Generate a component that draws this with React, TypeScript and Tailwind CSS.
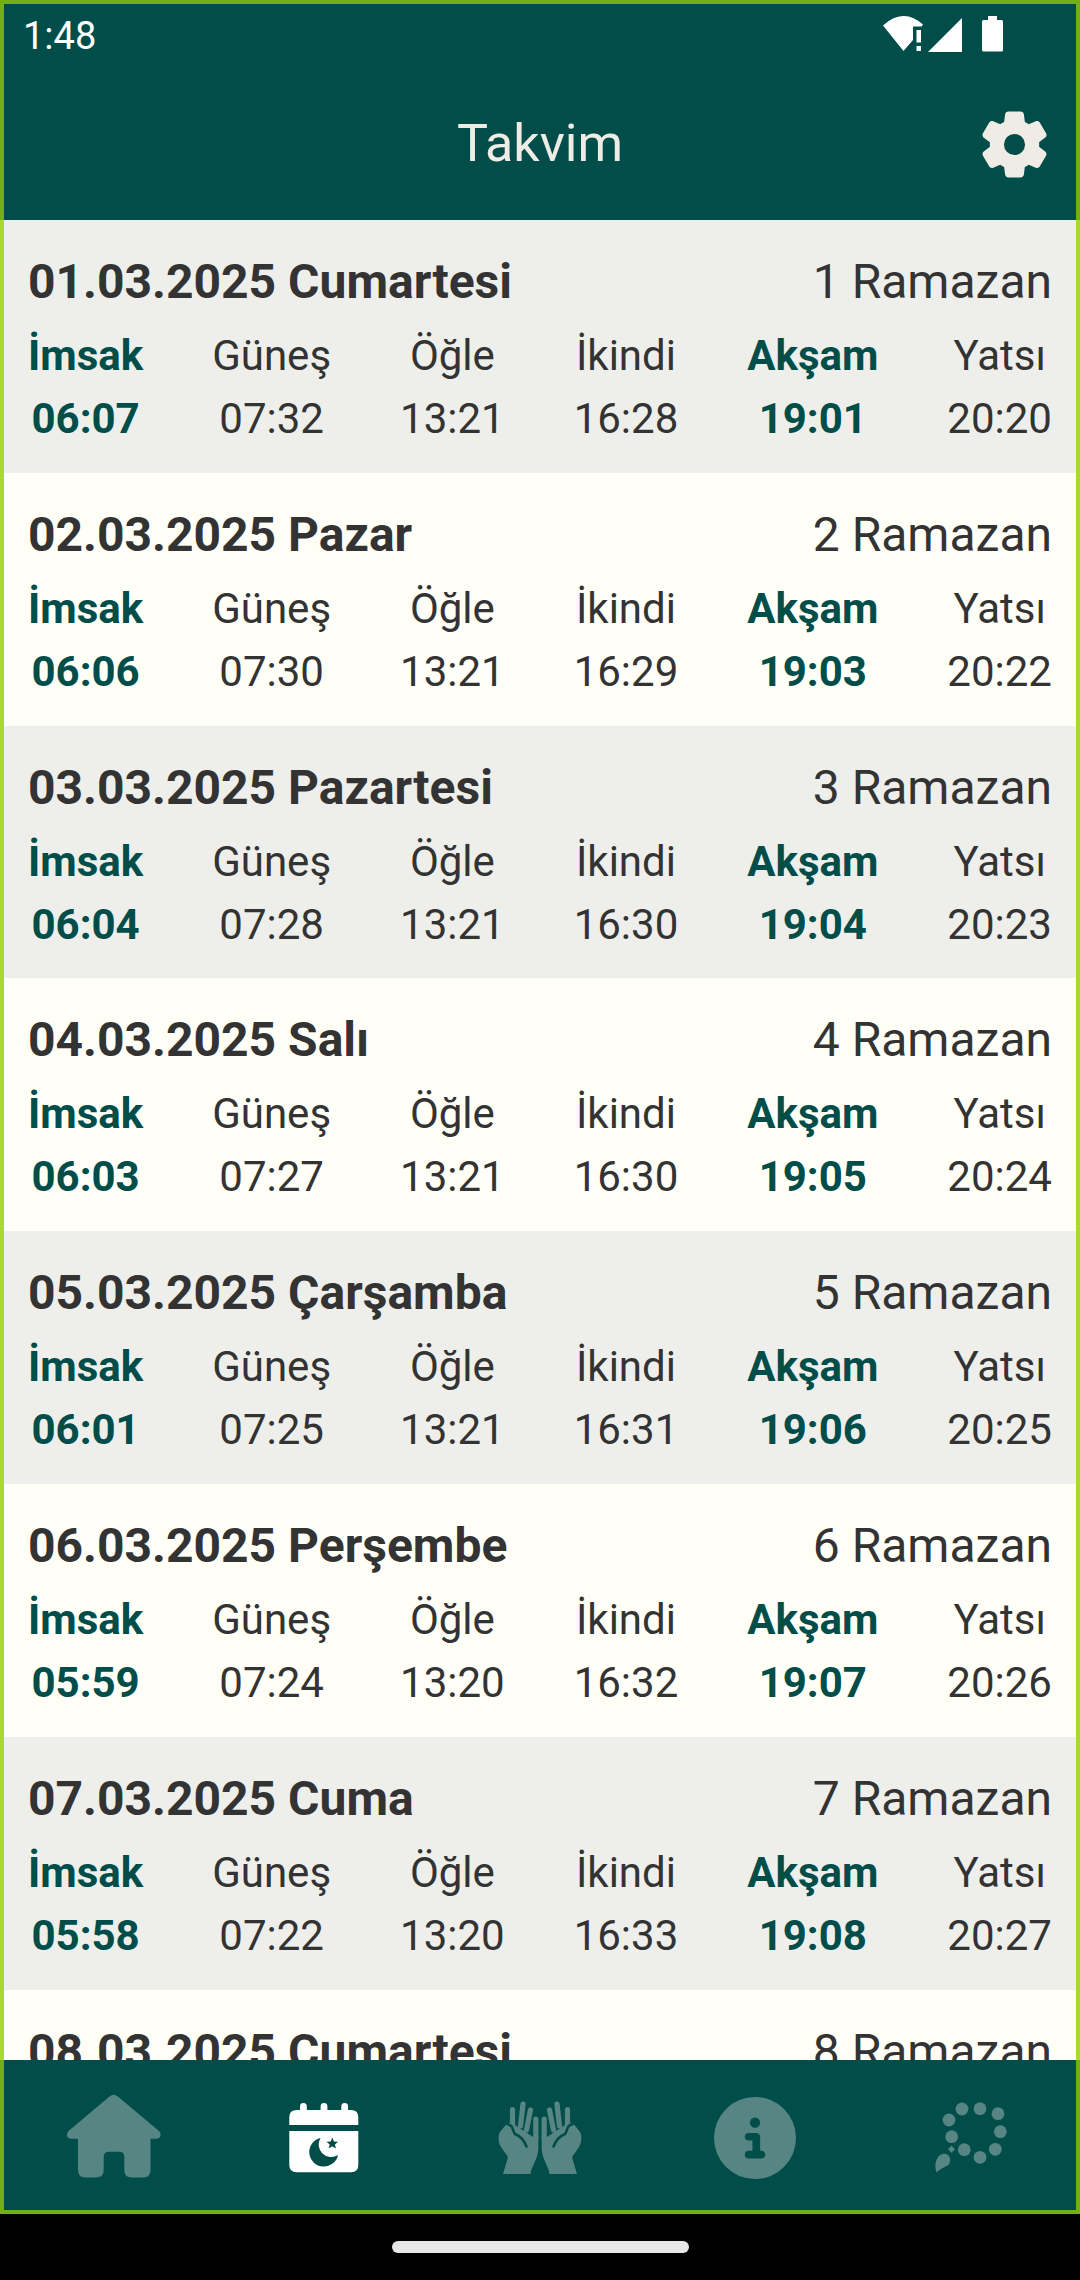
import { FaCircleInfo } from "react-icons/fa6";

const MUTED = "#568583";
const TEAL = "#004d4a";

const days = [
  { date: "01.03.2025 Cumartesi", hijri: "1 Ramazan", times: ["06:07", "07:32", "13:21", "16:28", "19:01", "20:20"] },
  { date: "02.03.2025 Pazar", hijri: "2 Ramazan", times: ["06:06", "07:30", "13:21", "16:29", "19:03", "20:22"] },
  { date: "03.03.2025 Pazartesi", hijri: "3 Ramazan", times: ["06:04", "07:28", "13:21", "16:30", "19:04", "20:23"] },
  { date: "04.03.2025 Salı", hijri: "4 Ramazan", times: ["06:03", "07:27", "13:21", "16:30", "19:05", "20:24"] },
  { date: "05.03.2025 Çarşamba", hijri: "5 Ramazan", times: ["06:01", "07:25", "13:21", "16:31", "19:06", "20:25"] },
  { date: "06.03.2025 Perşembe", hijri: "6 Ramazan", times: ["05:59", "07:24", "13:20", "16:32", "19:07", "20:26"] },
  { date: "07.03.2025 Cuma", hijri: "7 Ramazan", times: ["05:58", "07:22", "13:20", "16:33", "19:08", "20:27"] },
  { date: "08.03.2025 Cumartesi", hijri: "8 Ramazan", times: ["05:56", "07:20", "13:20", "16:33", "19:09", "20:28"] },
];

const labels = ["İmsak", "Güneş", "Öğle", "İkindi", "Akşam", "Yatsı"];

function StatusIcons() {
  return (
    <div className="flex items-start pr-[73px] pt-[12px]">
      <svg width="41" height="36" viewBox="0 0 41 36" fill="#fff">
        <path d="M0 9.5Q20-9 40 8.5L38.5 10.5H30V24L20.5 35Z" />
        <rect x="33.5" y="14" width="4.5" height="12.5" />
        <rect x="33.5" y="30" width="4.5" height="5" />
      </svg>
      <svg className="ml-[4px] mt-[1px]" width="34" height="35" viewBox="0 0 34 35" fill="#fff">
        <path d="M0 35 34 1V35Z" />
      </svg>
      <svg className="ml-[20px]" width="21" height="36" viewBox="0 0 21 36" fill="#fff">
        <path d="M6 0h9v4h4.5q1.5 0 1.5 1.5V34q0 1.5-1.5 1.5h-18Q0 35.500 0 34V5.500Q0 4 1.500 4H6Z" />
      </svg>
    </div>
  );
}

function Gear() {
  return (
    <svg width="79" height="79" viewBox="0 0 24 24" fill="#efece5">
      <path
        fillRule="evenodd"
        d="M19.500 12c0-.23-.01-.45-.03-.68l1.860-1.410c.4-.3.51-.86.26-1.300l-1.870-3.230c-.25-.44-.79-.62-1.250-.42l-2.150.91c-.37-.26-.76-.49-1.170-.68l-.29-2.310c-.06-.5-.49-.88-.99-.88h-3.730c-.51 0-.94.38-1 .88l-.29 2.310c-.41.19-.8.42-1.170.68l-2.150-.91c-.46-.2-1-.02-1.250.42L2.410 8.620c-.25.44-.14.99.26 1.300l1.860 1.410c-.02.22-.03.44-.03.67s.01.45.03.68l-1.860 1.410c-.4.3-.51.86-.26 1.300l1.870 3.230c.25.44.79.62 1.250.42l2.150-.91c.37.26.76.49 1.170.68l.29 2.310c.06.5.49.88.99.88h3.730c.5 0 .93-.38.99-.88l.29-2.310c.41-.19.8-.42 1.170-.68l2.150.91c.46.2 1 .02 1.250-.42l1.870-3.230c.25-.44.14-.99-.26-1.300l-1.860-1.410c.03-.23.04-.45.04-.68zM12 15.200a3.200 3.200 0 1 1 0-6.400 3.200 3.200 0 0 1 0 6.400z"
      />
    </svg>
  );
}

function DayRow({ day, odd }: { day: (typeof days)[number]; odd: boolean }) {
  return (
    <div className={`h-[252.8px] shrink-0 px-[24px] pt-[36px] ${odd ? "bg-[#eeefeb]" : "bg-[#fffff8]"}`}>
      <div className="flex items-center justify-between text-[48px] leading-[52px] text-[#333333]">
        <span className="font-bold">{day.date}</span>
        <span>{day.hijri}</span>
      </div>
      <div className="mt-[16px] flex justify-between text-[42px] leading-[63px] text-[#333333]">
        {labels.map((label, i) => {
          const strong = i === 0 || i === 4;
          return (
            <div key={label} className={`text-center ${strong ? "font-bold text-[#004d4a]" : ""}`}>
              <div>{label}</div>
              <div>{day.times[i]}</div>
            </div>
          );
        })}
      </div>
    </div>
  );
}

function HomeIcon() {
  return (
    <svg width="130" height="105" viewBox="-5 0 130 105" fill={MUTED}>
      <path d="M58.500 11.500q4.200-3.600 8.400 0L108 46q2.500 2.300 1.500 5-1 2.800-4 2.800H99.500V85q0 7.500-7.500 7.500H81q-7.700 0-7.700-7.500V72q0-5.300-5.300-5.300H58q-5.300 0-5.300 5.300v13q0 7.500-7.700 7.500H34.500Q27 92.500 27 85V53.800H20q-3 0-4-2.800-1-2.700 1.500-5Z" />
    </svg>
  );
}

function CalendarIcon() {
  return (
    <svg width="110" height="105" viewBox="1 0 110 105" fill="#fff">
      <path d="M30 25v-3.500a3.400 3.400 0 0 1 6.800 0V25H50.600v-3.500a3.400 3.400 0 0 1 6.800 0V25H71.300v-3.500a3.400 3.400 0 0 1 6.800 0V25H81q7.300 0 7.300 7.300V40H19.300v-7.700Q19.300 25 26.600 25Z" />
      <path
        fillRule="evenodd"
        d="M19.300 46H88.300v34q0 7.300-7.300 7.300H26.600q-7.300 0-7.300-7.300ZM50.500 53A14.500 14.500 0 1 0 68 70 12.500 12.500 0 0 1 50.500 53ZM62.300 52.500l1.600 3.900 4.200.3-3.200 2.700 1 4.100-3.600-2.200-3.600 2.200 1-4.100-3.200-2.700 4.200-.3Z"
      />
    </svg>
  );
}

function Hand() {
  return (
    <g>
      <path d="M32.500 24.500V40M43 19 40.500 41M50.500 25 46.500 45M55.800 34V54" stroke={MUTED} strokeWidth="5.200" strokeLinecap="round" fill="none" />
      <path
        d="M23 89H50.500C51 82 58 74 58.300 64V50L53 52 32 38C27 37 24 42 20 47 17.500 51 18.500 58 21 62L28 72Z"
        fill={MUTED}
      />
      <path d="M28 39.500C34 40 32 46 35 49 40 51 44 55 46.500 61.500" stroke={TEAL} strokeWidth="2.600" strokeLinecap="round" fill="none" />
    </g>
  );
}

function HandsIcon() {
  return (
    <svg width="120" height="105" viewBox="0 0 120 105">
      <Hand />
      <g transform="translate(120 0) scale(-1 1)">
        <Hand />
      </g>
    </svg>
  );
}

function InfoIcon() {
  return (
    <div className="flex h-[105px] w-[110px] items-center justify-center pl-[2px]">
      <FaCircleInfo size={82} color={MUTED} />
    </div>
  );
}

function BeadsIcon() {
  const beads = [
    [43, 24],
    [61, 23.7],
    [79, 28.700],
    [81.300, 46.700],
    [76.300, 64.300],
    [61, 72.300],
    [45.300, 64.700],
    [32.700, 51.700],
    [30, 35],
  ];
  return (
    <svg width="110" height="105" viewBox="-5 0 110 105" fill={MUTED}>
      {beads.map(([cx, cy]) => (
        <circle key={`${cx}-${cy}`} cx={cx} cy={cy} r="6.400" />
      ))}
      <path d="M32.500 60.800 36 64.300 32.500 67.800 29 64.300Z" />
      <path d="M17.300 87.500C15 79 17 71 23.500 69 29 67.500 32 72 31 77 30 82 23 82 17.300 87.500Z" />
    </svg>
  );
}

export default function App() {
  return (
    <div className="flex h-[2280px] w-[1080px] flex-col bg-black font-['Roboto',sans-serif]">
      <div className="flex h-[2214px] flex-col">
        <header className="h-[220px] shrink-0 border-x-4 border-t-4 border-[#74ae16] bg-[#004d4a]">
          <div className="flex h-[64px] items-start justify-between">
            <span className="pl-[19px] pt-[10px] text-[38px] leading-[45px] text-white">1:48</span>
            <StatusIcons />
          </div>
          <div className="grid h-[152px] grid-cols-[1fr_auto_1fr] items-center">
            <div />
            <h1 className="text-[52px] font-normal leading-[60px] text-[#efece5]">Takvim</h1>
            <div className="flex justify-end pr-[22px]">
              <Gear />
            </div>
          </div>
        </header>

        <div className="min-h-0 flex-1 overflow-hidden border-x-4 border-[#a8d92e]">
          {days.map((day, i) => (
            <DayRow key={day.date} day={day} odd={i % 2 === 0} />
          ))}
        </div>

        <nav className="grid h-[154px] shrink-0 grid-cols-5 border-x-4 border-b-4 border-[#74ae16] bg-[#004d4a] pt-[5px]">
          {[<HomeIcon />, <CalendarIcon />, <HandsIcon />, <InfoIcon />, <BeadsIcon />].map((icon, i) => (
            <div key={i} className="flex items-center justify-center">
              {icon}
            </div>
          ))}
        </nav>
      </div>

      <div className="flex flex-1 justify-center pt-[27px]">
        <div className="h-[12px] w-[297px] rounded-full bg-[#e8e8e8]" />
      </div>
    </div>
  );
}
